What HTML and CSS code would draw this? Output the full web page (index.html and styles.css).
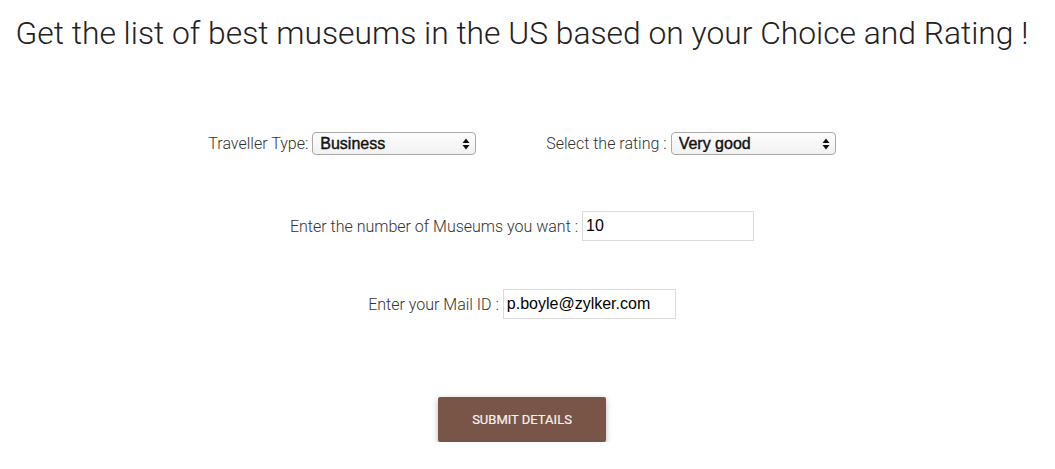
FILE: index.html
```html
<!DOCTYPE html>
<html>
<head>
<meta charset="utf-8">
<link rel="stylesheet" href="styles.css">
</head>
<body>
<div class="page">
  <h1 class="title">Get the list of best museums in the US based on your Choice and Rating !</h1>
  <form class="form">
    <div class="row row-selects">
      <label class="field">
        <span class="label">Traveller Type:</span>
        <span class="select-wrap">
          <select class="select select-type">
            <option>Business</option>
            <option>Couples</option>
            <option>Family</option>
            <option>Friends</option>
            <option>Solo</option>
          </select>
          <svg class="arrows" width="8" height="12" viewBox="0 0 8 12"><path d="M4 0.5 L7.5 5 L0.5 5 Z M4 11.5 L7.5 7 L0.5 7 Z" fill="#111"/></svg>
        </span>
      </label>
      <label class="field">
        <span class="label">Select the rating :</span>
        <span class="select-wrap">
          <select class="select select-rating">
            <option>Very good</option>
            <option>Excellent</option>
            <option>Average</option>
          </select>
          <svg class="arrows" width="8" height="12" viewBox="0 0 8 12"><path d="M4 0.5 L7.5 5 L0.5 5 Z M4 11.5 L7.5 7 L0.5 7 Z" fill="#111"/></svg>
        </span>
      </label>
    </div>
    <div class="row row-number">
      <label class="field">
        <span class="label">Enter the number of Museums you want :</span>
        <input class="input input-number" type="text" value="10">
      </label>
    </div>
    <div class="row row-mail">
      <label class="field">
        <span class="label">Enter your Mail ID :</span>
        <input class="input input-mail" type="text" value="p.boyle@zylker.com">
      </label>
    </div>
    <div class="row row-button">
      <button class="submit" type="button">SUBMIT DETAILS</button>
    </div>
  </form>
</div>
</body>
</html>
```

FILE: styles.css
```css
html, body {
  margin: 0;
  padding: 0;
  background: #fff;
}
.page {
  width: 1044px;
  font-family: Roboto, "Liberation Sans", sans-serif;
}
.title {
  margin: 0;
  padding-top: 12px;
  text-align: center;
  white-space: nowrap;
  font-weight: 300;
  font-size: 31.8px;
  line-height: 42px;
  color: #222;
}
.form {
  display: flex;
  flex-direction: column;
  align-items: center;
}
.row {
  display: flex;
  justify-content: center;
  align-items: center;
}
.row-selects {
  margin-top: 78px;
  gap: 70px;
}
.row-number {
  margin-top: 56px;
}
.row-mail {
  margin-top: 48px;
}
.row-button {
  margin-top: 78px;
}
.field {
  display: flex;
  align-items: center;
  gap: 4px;
}
.label {
  font-size: 16px;
  font-weight: 300;
  color: #333;
}
.select-wrap {
  position: relative;
  display: inline-block;
}
.select {
  appearance: none;
  -webkit-appearance: none;
  height: 23px;
  box-sizing: border-box;
  border: 1px solid #a9a9a9;
  border-radius: 4px;
  background: linear-gradient(#fdfdfd, #f1f1f1);
  font-family: "Liberation Sans", Arial, sans-serif;
  font-size: 16px;
  font-weight: normal;
  -webkit-text-stroke: 0.4px #111;
  color: #111;
  padding: 0 20px 0 7px;
  margin: 0;
  outline: none;
}
.select-type { width: 164px; }
.select-rating { width: 165px; }
.arrows {
  position: absolute;
  right: 6px;
  top: 6px;
  pointer-events: none;
}
.input {
  box-sizing: border-box;
  height: 30px;
  border: 1px solid #dcdcdc;
  font-family: "Liberation Sans", Arial, sans-serif;
  font-size: 16px;
  color: #000;
  padding: 0 3px;
  margin: 0;
  outline: none;
}
.input-number { width: 172px; }
.input-mail { width: 173px; }
.submit {
  width: 168px;
  height: 45px;
  border: none;
  border-radius: 2px;
  background: #795548;
  color: #f6f2ef;
  font-family: Roboto, "Liberation Sans", sans-serif;
  font-size: 13px;
  font-weight: 400;
  -webkit-text-stroke: 0.2px #f6f2ef;
  box-shadow: 0 2px 6px rgba(0,0,0,0.28);
  cursor: pointer;
}
```
